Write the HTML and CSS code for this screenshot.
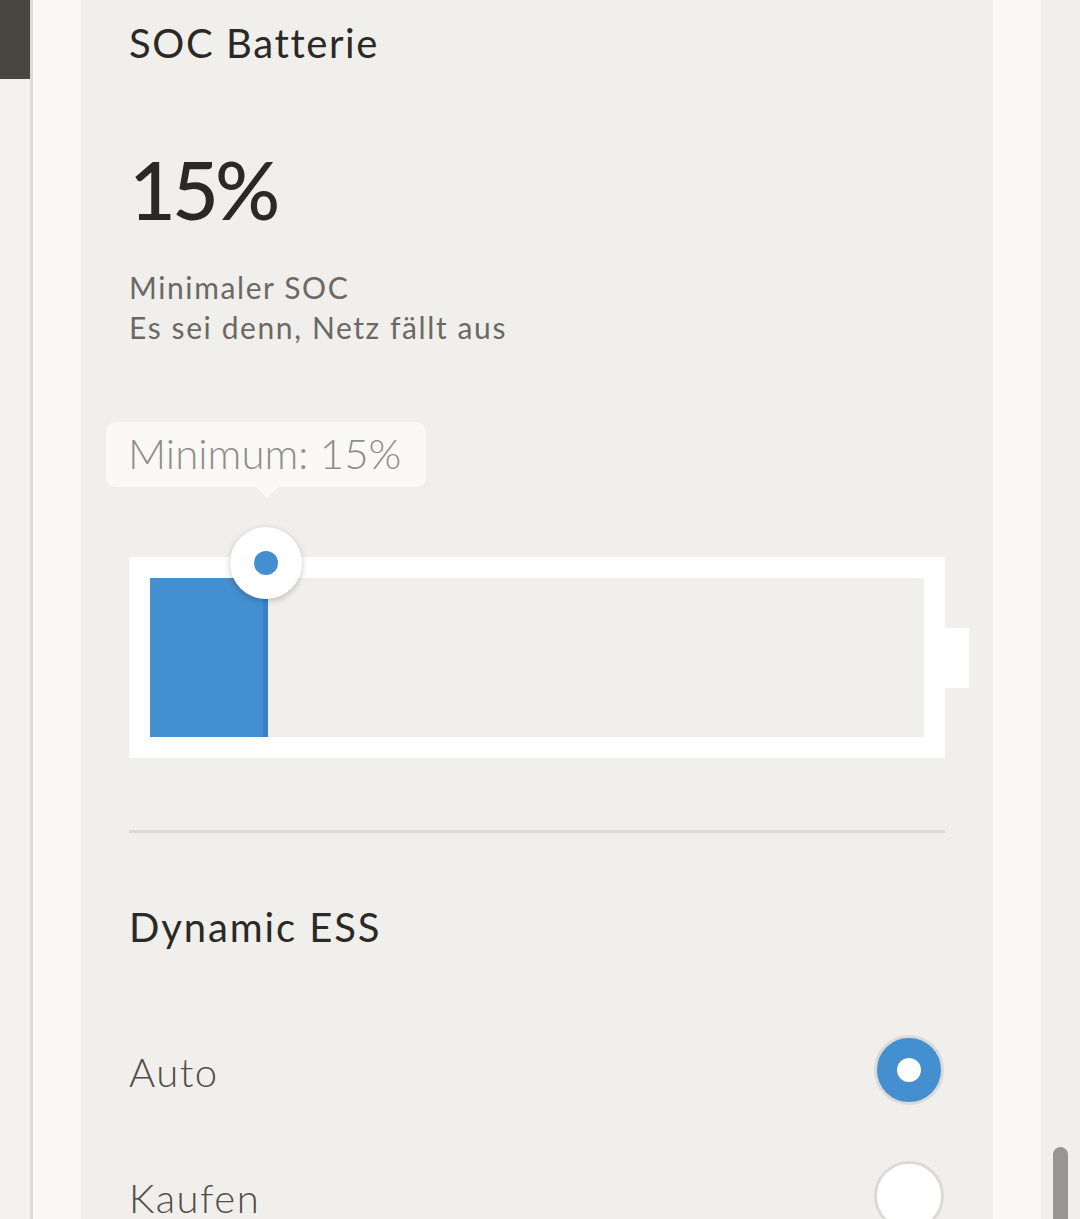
FILE: index.html
```html
<!DOCTYPE html>
<html lang="de">
<head>
<meta charset="utf-8">
<title>SOC Batterie</title>
<link rel="stylesheet" href="styles.css">
</head>
<body>
<div class="screen">
  <div class="left-col"><div class="left-dark"></div></div>
  <div class="left-border"></div>
  <div class="gutter"></div>
  <main class="panel">
    <h2 class="heading">SOC Batterie</h2>
    <div class="big-value">15%</div>
    <p class="sub">Minimaler SOC<br>Es sei denn, Netz fällt aus</p>
    <div class="slider">
      <div class="tooltip">Minimum: 15%</div>
      <div class="battery">
        <div class="battery-fill"></div>
      </div>
      <div class="knob"><span class="knob-dot"></span></div>
    </div>
    <hr class="divider">
    <h2 class="heading heading-ess">Dynamic ESS</h2>
    <div class="options">
      <div class="option">
        <span class="option-label">Auto</span>
        <span class="radio radio-on"><span class="radio-dot"></span></span>
      </div>
      <div class="option">
        <span class="option-label">Kaufen</span>
        <span class="radio"></span>
      </div>
    </div>
  </main>
  <div class="gutter"></div>
  <div class="right-col"><div class="scroll-thumb"></div></div>
</div>
</body>
</html>
```
FILE: styles.css
```css
html, body {
  margin: 0;
  padding: 0;
}
body {
  font-family: Lato, "Open Sans", sans-serif;
  background: #f0efeb;
}
.screen {
  display: flex;
  width: 1080px;
  height: 1219px;
  overflow: hidden;
}
.left-col {
  width: 30px;
  flex: none;
  background: #f2f1ee;
}
.left-dark {
  height: 79px;
  background: #484641;
}
.left-border {
  width: 3px;
  flex: none;
  background: #dddbd7;
}
.gutter {
  width: 48px;
  flex: none;
  background: #faf9f6;
}
.panel {
  width: 912px;
  flex: none;
  box-sizing: border-box;
  padding: 19px 48px 0 48px;
  background: #f0efeb;
}
.heading {
  margin: 0;
  font-size: 40px;
  line-height: 48px;
  font-weight: 400;
  letter-spacing: 1.6px;
  color: #2b2926;
}
.heading-ess {
  margin-top: 70px;
  letter-spacing: 1.9px;
}
.big-value {
  margin-top: 74px;
  font-size: 81px;
  line-height: 96px;
  font-weight: 500;
  letter-spacing: -4px;
  color: #2b2926;
}
.sub {
  margin: 30px 0 0 0;
  font-size: 30px;
  line-height: 40px;
  font-weight: 400;
  letter-spacing: 1.6px;
  color: #6b6965;
}
.slider {
  position: relative;
  margin-top: 75px;
  padding-top: 135px;
}
.tooltip {
  position: absolute;
  top: 0;
  left: -23px;
  width: 320px;
  height: 65px;
  box-sizing: border-box;
  padding-left: 22px;
  border-radius: 10px;
  background: #faf9f6;
  font-size: 42px;
  line-height: 62px;
  font-weight: 300;
  color: #8f8e8a;
}
.tooltip::after {
  content: "";
  position: absolute;
  left: 150px;
  bottom: -11px;
  border-left: 11px solid transparent;
  border-right: 11px solid transparent;
  border-top: 11px solid #faf9f6;
}
.battery {
  position: relative;
  height: 201px;
  box-sizing: border-box;
  border: 21px solid #ffffff;
  background: #f0efeb;
}
.battery::after {
  content: "";
  position: absolute;
  right: -45px;
  top: 50px;
  width: 24px;
  height: 60px;
  background: #ffffff;
}
.battery-fill {
  width: 118px;
  height: 100%;
  box-sizing: border-box;
  background: #448fcf;
  border-right: 5px solid #3b80c8;
}
.knob {
  position: absolute;
  left: 101px;
  top: 105px;
  width: 72px;
  height: 72px;
  border-radius: 50%;
  background: #ffffff;
  box-shadow: 0 2px 6px rgba(0, 0, 0, 0.22);
  display: flex;
  align-items: center;
  justify-content: center;
}
.knob-dot {
  width: 24px;
  height: 24px;
  border-radius: 50%;
  background: #448fcf;
}
.divider {
  margin: 72px 0 0 0;
  height: 3px;
  border: 0;
  background: #dcdad6;
}
.options {
  margin-top: 56px;
}
.option {
  display: flex;
  align-items: center;
  justify-content: space-between;
  height: 126px;
}
.option-label {
  font-size: 40px;
  line-height: 48px;
  font-weight: 300;
  letter-spacing: 1.5px;
  color: #4f4d49;
  position: relative;
  top: 2px;
}
.radio {
  width: 70px;
  height: 70px;
  box-sizing: border-box;
  border-radius: 50%;
  border: 3px solid #dcdad6;
  background: #ffffff;
  display: flex;
  align-items: center;
  justify-content: center;
  margin-right: 1px;
}
.radio-on {
  background: #448fcf;
}
.radio-dot {
  width: 24px;
  height: 24px;
  border-radius: 50%;
  background: #ffffff;
}
.right-col {
  width: 39px;
  flex: none;
  box-sizing: border-box;
  padding: 1147px 0 0 12px;
  background: #f0efeb;
}
.scroll-thumb {
  width: 15px;
  height: 120px;
  border-radius: 8px;
  background: #979692;
}
```
